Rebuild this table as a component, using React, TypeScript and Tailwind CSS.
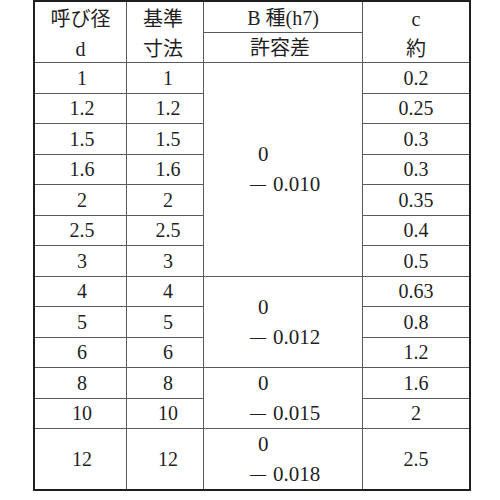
import React from "react";

const fontStack = "font-['Liberation_Serif','Noto_Sans_CJK_JP',serif]";

type Row = {
    d: string;
    base: string;
    c: string;
    tol?: { minus: string; span: string };
    tall?: boolean;
};

const rows: Row[] = [
    { d: "1", base: "1", c: "0.2", tol: { minus: "0.010", span: "row-span-7" } },
    { d: "1.2", base: "1.2", c: "0.25" },
    { d: "1.5", base: "1.5", c: "0.3" },
    { d: "1.6", base: "1.6", c: "0.3" },
    { d: "2", base: "2", c: "0.35" },
    { d: "2.5", base: "2.5", c: "0.4" },
    { d: "3", base: "3", c: "0.5" },
    { d: "4", base: "4", c: "0.63", tol: { minus: "0.012", span: "row-span-3" } },
    { d: "5", base: "5", c: "0.8" },
    { d: "6", base: "6", c: "1.2" },
    { d: "8", base: "8", c: "1.6", tol: { minus: "0.015", span: "row-span-2" } },
    { d: "10", base: "10", c: "2" },
    { d: "12", base: "12", c: "2.5", tol: { minus: "0.018", span: "row-span-2" }, tall: true },
];

const Cell: React.FC<{ children: React.ReactNode; className?: string }> = ({ children, className }) => (
    <div className={`bg-white flex items-center justify-center ${className ?? ""}`}>{children}</div>
);

// "0" over "— 0.0xx", left aligned inside the merged cell
const Tolerance: React.FC<{ minus: string; span: string }> = ({ minus, span }) => (
    <div className={`bg-white flex flex-col justify-center pl-[46px] leading-[30px] text-[21px] ${span}`}>
        <div className="pl-[8px]">0</div>
        <div className="flex items-center">
            <span className="text-[16px] mr-[7px]">—</span>
            <span>{minus}</span>
        </div>
    </div>
);

export default function App() {
    return (
        <div className="w-[500px] h-[500px] bg-white pl-[33px]">
            <div
                className={`w-[438px] h-[491px] border-2 border-[#1e1e1e] bg-[#5a5a5a] grid grid-cols-[91px_76px_158px_106px] grid-rows-[repeat(16,minmax(0,1fr))] gap-px text-[20px] text-[#1f1f1f] ${fontStack}`}
            >
                {/* header */}
                <div className="bg-white row-span-2 flex flex-col pt-[2px]">
                    <div className="flex-1 flex items-center justify-center">呼び径</div>
                    <div className="flex-1 flex items-center justify-center">d</div>
                </div>
                <div className="bg-white row-span-2 flex flex-col pt-[2px]">
                    <div className="flex-1 flex items-center justify-center pr-[4px]">基準</div>
                    <div className="flex-1 flex items-center justify-center pr-[4px]">寸法</div>
                </div>
                <Cell className="pt-[2px]">
                    <span>B 種(h7)</span>
                </Cell>
                <div className="bg-white row-span-2 flex flex-col pt-[2px]">
                    <div className="flex-1 flex items-center justify-center">c</div>
                    <div className="flex-1 flex items-center justify-center">約</div>
                </div>
                <Cell className="pt-[2px] pr-[6px]">許容差</Cell>

                {/* body */}
                {rows.map((r, i) => (
                    <React.Fragment key={i}>
                        <Cell className={`pl-[3px] ${r.tall ? "row-span-2" : ""}`}>{r.d}</Cell>
                        <Cell className={`pl-[6px] ${r.tall ? "row-span-2" : ""}`}>{r.base}</Cell>
                        {r.tol && <Tolerance minus={r.tol.minus} span={r.tol.span} />}
                        <Cell className={r.tall ? "row-span-2" : ""}>{r.c}</Cell>
                    </React.Fragment>
                ))}
            </div>
        </div>
    );
}
